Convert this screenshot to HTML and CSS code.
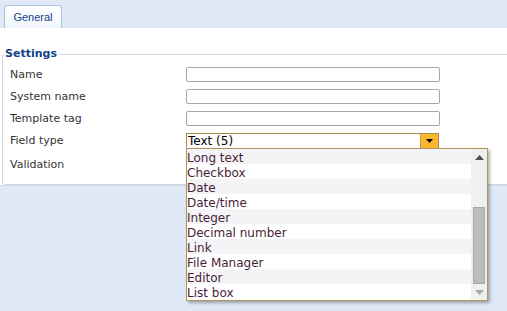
FILE: index.html
```html
<!DOCTYPE html>
<html>
<head>
<meta charset="utf-8">
<link rel="stylesheet" href="styles.css">
</head>
<body>
<div class="tabbar">
  <div class="tab">General</div>
</div>
<div class="panel">
  <fieldset class="settings">
    <legend>Settings</legend>
    <div class="form">
      <div class="row"><span class="label">Name</span><span class="input"></span></div>
      <div class="row"><span class="label">System name</span><span class="input"></span></div>
      <div class="row"><span class="label">Template tag</span><span class="input"></span></div>
      <div class="row"><span class="label">Field type</span>
        <div class="select"><span class="value">Text (5)</span><span class="trigger"><svg width="7" height="4" viewBox="0 0 7 4"><path d="M0 0H7L3.5 4Z" fill="#000"/></svg></span></div>
      </div>
      <div class="row"><span class="label">Validation</span></div>
    </div>
  </fieldset>
</div>
<div class="dropdown">
  <ul class="items">
    <li>Long text</li>
    <li>Checkbox</li>
    <li>Date</li>
    <li>Date/time</li>
    <li>Integer</li>
    <li>Decimal number</li>
    <li>Link</li>
    <li>File Manager</li>
    <li>Editor</li>
    <li>List box</li>
  </ul>
  <div class="scrollbar">
    <svg class="arrow" width="9" height="5" viewBox="0 0 9 5"><path d="M0 5H9L4.5 0Z" fill="#505050"/></svg>
    <div class="track"><div class="thumb"></div></div>
    <svg class="arrow" width="9" height="5" viewBox="0 0 9 5"><path d="M0 0H9L4.5 5Z" fill="#a8a8a8"/></svg>
  </div>
</div>
</body>
</html>
```
FILE: styles.css
```css
html, body {
  margin: 0;
  padding: 0;
}
body {
  background: #dfe8f6;
  font-family: "DejaVu Sans", Verdana, sans-serif;
  font-size: 11px;
  width: 507px;
  height: 311px;
  overflow: hidden;
  position: relative;
}
.tabbar {
  height: 28px;
  box-sizing: border-box;
  padding: 5px 0 0 4px;
  background: #dfe8f6;
  display: flex;
}
.tab {
  width: 58px;
  height: 23px;
  box-sizing: border-box;
  border: 1px solid #a9c2e4;
  border-bottom: none;
  border-radius: 3px 3px 0 0;
  background: linear-gradient(#ffffff, #f1f5fb);
  font-family: "Liberation Sans", Arial, sans-serif;
  font-size: 11px;
  color: #15428b;
  text-align: center;
  line-height: 22px;
}
.panel {
  background: #fff;
  height: 158px;
  box-sizing: border-box;
  border-bottom: 1px solid #d0dbe8;
  padding: 20px 0 0 2px;
  overflow: hidden;
}
.settings {
  margin: 0 -10px 0 0;
  padding: 7px 0 8px 0;
  border: 1px solid #d0d7df;
  border-radius: 3px;
  height: 137px;
  box-sizing: border-box;
}
.settings legend {
  padding: 0 2px 0 1px;
  margin-left: 1px;
  font-weight: bold;
  font-size: 11px;
  color: #15428b;
  line-height: 12px;
}
.form {
  display: flex;
  flex-direction: column;
  gap: 7px;
  padding-left: 7px;
}
.row {
  display: flex;
  align-items: center;
  height: 15px;
}
.row:last-child {
  margin-top: 2px;
}
.label {
  width: 176px;
  color: #333;
}
.input {
  width: 254px;
  height: 15px;
  box-sizing: border-box;
  border: 1px solid #a8a8a8;
  border-radius: 2px;
  background: #fff;
}
.select {
  width: 253px;
  height: 16px;
  box-sizing: border-box;
  border: 1px solid #a98b52;
  display: flex;
  margin-top: 1px;
}
.select .value {
  flex: 1;
  font-size: 12px;
  line-height: 14px;
  color: #000;
  padding-left: 1px;
}
.select .trigger {
  width: 17px;
  background: #fbb732;
  border-left: 1px solid #c89a3c;
  display: flex;
  align-items: center;
  justify-content: center;
}
.dropdown {
  position: absolute;
  left: 186px;
  top: 148px;
  width: 302px;
  height: 153px;
  box-sizing: border-box;
  border: 1px solid #b0955a;
  background: #fff;
  display: flex;
  box-shadow: 2px 2px 3px rgba(0,0,0,0.3);
}
.items {
  list-style: none;
  margin: 0;
  padding: 0;
  flex: 1;
}
.items li {
  height: 13px;
  padding-top: 2px;
  line-height: 15px;
  font-size: 12px;
  color: #4a1d3a;
}
.items li:nth-child(odd) {
  background: #f4f4f6;
}
.scrollbar {
  width: 16px;
  background: #f0f0f0;
  display: flex;
  flex-direction: column;
  align-items: center;
}
.scrollbar .arrow {
  margin: 6px 0 5px;
  flex: none;
}
.track {
  flex: 1;
  width: 100%;
  display: flex;
  flex-direction: column;
  justify-content: flex-end;
  align-items: center;
}
.thumb {
  width: 12px;
  height: 77px;
  box-sizing: border-box;
  background: #bcbcbc;
  border: 1px solid #a8a8a8;
}
```
